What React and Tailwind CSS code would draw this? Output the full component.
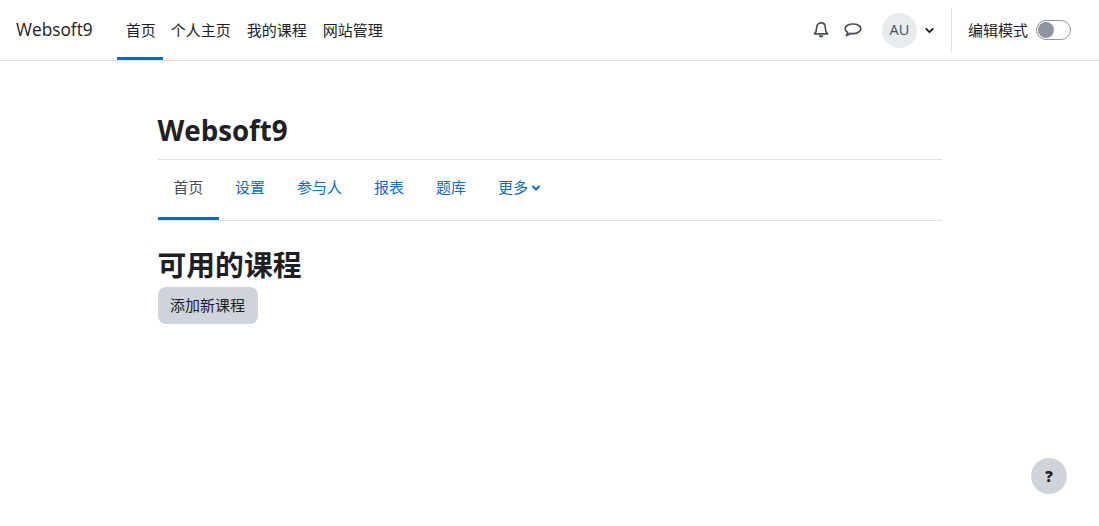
import React from "react";
import { ChevronDown } from "lucide-react";

const FONT = "font-['Open_Sans','Noto_Sans_CJK_SC',sans-serif]";

const topLinks = ["个人主页", "我的课程", "网站管理"];
const courseTabs = ["设置", "参与人", "报表", "题库"];

function Bell() {
  return (
    <svg width="16" height="18" viewBox="0 0 17 18" fill="none" stroke="#495057" strokeWidth="1.8">
      <path d="M8.500 1.500c-2.900 0-4.600 2.100-4.600 4.800 0 3.500-.7 5.300-2.300 6.900h13.800c-1.600-1.600-2.300-3.400-2.300-6.900 0-2.700-1.700-4.800-4.600-4.800z" strokeLinejoin="round" />
      <path d="M6 14.500h5a2.500 2.500 0 0 1-5 0z" fill="#495057" stroke="none" />
    </svg>
  );
}

function Bubble() {
  return (
    <svg width="18" height="16" viewBox="0 0 18 16" fill="none" stroke="#495057" strokeWidth="1.7">
      <path d="M9 2C4.800 2 1.200 3.900 1.200 6.800c0 1.500 1 2.800 2.500 3.600-.1 1.100-.6 2.100-1.300 3 1.500-.3 2.900-1 3.900-2 .8.200 1.700.3 2.700.3 4.200 0 7.800-2.100 7.800-4.900S13.200 2 9 2z" strokeLinejoin="round" />
    </svg>
  );
}

function App() {
  return (
    <div className={`min-h-screen bg-white text-[15px] text-[#1d2125] ${FONT}`}>
      {/* Barra superior */}
      <nav className="flex h-[61px] items-stretch border-b border-[#dee2e6] pl-4 pr-7">
        <a className="mr-6 flex items-center text-[17.3px] text-[#1d2125]">Websoft9</a>
        <a className="flex items-center border-b-[3px] border-[#0f6cbf] pl-[9px] pr-[7px] pt-[3px]">首页</a>
        {topLinks.map((link) => (
          <a key={link} className="flex items-center px-2">
            {link}
          </a>
        ))}

        <div className="ml-auto flex items-center">
          <Bell />
          <span className="ml-[15px]">
            <Bubble />
          </span>
          <span className="ml-5 flex h-[35px] w-[35px] items-center justify-center rounded-full bg-[#e9ecef] text-[14.500px] text-[#495057]">
            AU
          </span>
          <ChevronDown className="ml-[6px] h-[13px] w-[13px] text-[#1d2125]" strokeWidth={3.5} />
          <div className="ml-[15px] mr-4 h-[45px] w-px bg-[#dee2e6]" />
          <span>编辑模式</span>
          <span className="ml-2 flex h-[20px] w-[35px] items-center rounded-full border border-[#8f959e] bg-white px-px">
            <span className="h-4 w-4 rounded-full bg-[#8f959e]" />
          </span>
        </div>
      </nav>

      {/* Conteudo */}
      <main className="mx-auto w-[784px]">
        <h1 className="flex h-[99px] items-end border-b border-[#dee2e6] pb-[8px] text-[27.700px] font-bold leading-[42px]">
          Websoft9
        </h1>
        <div className="flex h-[61px] items-stretch border-b border-[#dee2e6]">
          <a className="flex w-[61.500px] items-center justify-center border-b-[3px] border-[#0f6cbf] pb-[2px] text-[#495057]">首页</a>
          {courseTabs.map((tab) => (
            <a key={tab} className="flex items-center border-b-[3px] border-transparent px-4 pb-[2px] text-[#0f6cbf]">
              {tab}
            </a>
          ))}
          <a className="flex items-center border-b-[3px] border-transparent pb-[2px] pl-4 text-[#0f6cbf]">
            更多
            <ChevronDown className="ml-[2px] h-[12px] w-[12px]" strokeWidth={4} />
          </a>
        </div>
        <h2 className="mt-[21px] text-[28.800px] font-bold leading-[45px]">可用的课程</h2>
        <button className="block h-[37px] w-[100px] rounded-lg bg-[#ced4da] text-center text-[#1d2125]">
          添加新课程
        </button>
      </main>

      {/* Botao de ajuda */}
      <button className="fixed bottom-[32px] right-[32px] flex h-9 w-9 items-center justify-center rounded-full bg-[#ced4da] text-[15px] font-extrabold text-[#1d2125]">
        ?
      </button>
    </div>
  );
}

export default App;
